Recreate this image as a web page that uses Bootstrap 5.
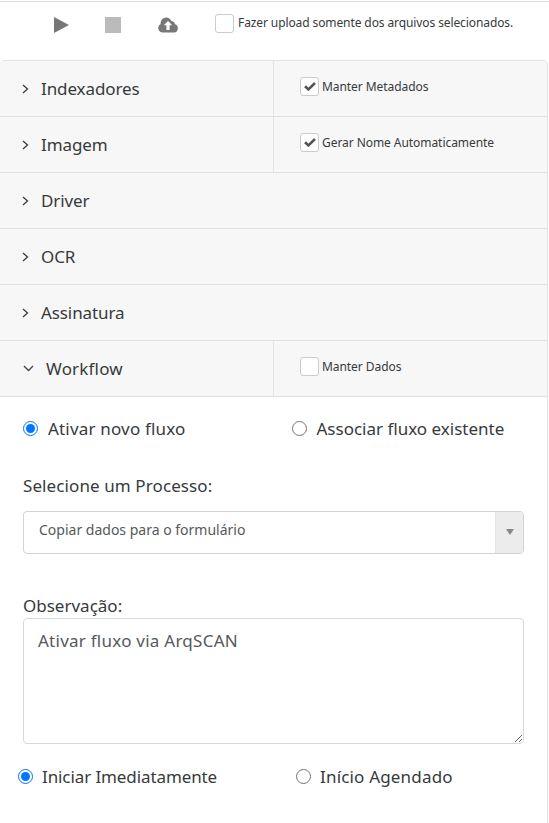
<!DOCTYPE html>
<html lang="pt-BR">
<head>
<meta charset="utf-8">
<meta name="viewport" content="width=device-width, initial-scale=1">
<title>ArqSCAN</title>
<link href="https://cdn.jsdelivr.net/npm/bootstrap@5.3.0/dist/css/bootstrap.min.css" rel="stylesheet">
<style>
body{font-family:"Noto Sans","Open Sans",sans-serif;font-size:17px;color:#373a3c;background:#fff;overflow:hidden}
.page{height:823px;padding-top:1px}
.toolbar{height:59px;border-top:1px solid #dcdcdc;padding:8px 0 0 54px}
.toolbar svg{display:block;flex:none}
.tool-play{margin:7px 36px 0 0}
.tool-stop{margin:7px 37px 0 0}
.tool-cloud{margin:7px 37px 0 0}
.panel{width:548px;height:763px;border:2px solid #e2e2e2;border-width:1px 1px 0 0;border-radius:5px 5px 0 0;overflow:hidden}
.panel-row{height:56px;background:#f7f7f7;border-bottom:1px solid #dfdfdf}
.row-title{width:274px;padding-left:22px;letter-spacing:-.1px}
.row-title.split{border-right:1px solid #e4e4e4}
.row-title svg{flex:none;margin-right:12px}
.opt{font-size:12px;line-height:19px;letter-spacing:-.06px}
.opt-top{letter-spacing:-.1px}
.opt-top .box{margin:4px 4px 0 0}
.opt-top .opt-text{margin-top:3px}
.opt-side{padding:16px 0 0 26px}
.box{width:19px;height:19px;border:1px solid #ccc;border-radius:3px;background:#fff;margin-right:3px;flex:none;display:flex;align-items:center;justify-content:center}
.choice{line-height:24px}
.choice input{width:15px;height:15px;margin:0 10px 2px 0;flex:none;accent-color:#0075ff}
.loose{letter-spacing:.18px}
.tight{letter-spacing:-.1px}
.choices-top{padding:20px 0 0 23px}
.choices-top .choice:first-child{width:268.5px}
.choices-end{padding:21px 0 0 18px}
.choices-end .choice:first-child{width:278px}
.choices-end input{margin-right:9px}
.fields{width:501px;margin-left:23px}
.lbl-a{margin-top:33px;line-height:24px;letter-spacing:.1px}
.picker{height:43px;margin-top:13px;border:1px solid #ced4da;border-radius:4px;font-size:14px;color:#55595c;overflow:hidden}
.picker-text{padding:7px 0 0 15px}
.picker-arrow{width:28px;background:#ececec;border-left:1px solid #e4e4e4;padding-bottom:2px}
.lbl-b{margin-top:40px;line-height:24px}
.note{height:126px;padding:10px 14px;font-size:17px;line-height:24px;letter-spacing:.25px;color:#55595c;border-color:#d5d9de;border-radius:4px}
</style>
<script src="https://cdn.jsdelivr.net/npm/bootstrap@5.3.0/dist/js/bootstrap.bundle.min.js"></script>
</head>
<body>
<main class="page">
  <div class="toolbar d-flex align-items-start">
    <svg class="tool-play" width="15" height="16" viewBox="0 0 15 16"><path d="M0 0L15 8L0 16Z" fill="#777"/></svg>
    <svg class="tool-stop" width="16" height="16"><rect width="16" height="16" fill="#bbb"/></svg>
    <svg class="tool-cloud" width="20" height="16" viewBox="0 0 20 16"><path fill="#777" fill-rule="evenodd" d="M4.7 15.5A4.5 4.5 0 0 1 2.7 7A5.6 5.6 0 0 1 13.5 4.2A3 3 0 0 1 16.9 7.3A4.2 4.2 0 0 1 16 15.5ZM10 4L5.8 8.3H8.4V13H11.6V8.3H14.2Z"/></svg>
    <label class="opt opt-top d-flex"><span class="box"></span><span class="opt-text">Fazer upload somente dos arquivos selecionados.</span></label>
  </div>
  <section class="panel">
    <div class="panel-row d-flex">
      <div class="row-title split d-flex align-items-center"><svg width="7" height="10" viewBox="0 0 7 10" fill="none" stroke="#444" stroke-width="1.4"><path d="M1 1L5.5 5L1 9"/></svg><span>Indexadores</span></div>
      <label class="opt opt-side d-flex"><span class="box"><svg width="12" height="9" viewBox="0 0 12 9"><path d="M1 4.2L4.4 7.4L11 1" fill="none" stroke="#555" stroke-width="2.6"/></svg></span><span>Manter Metadados</span></label>
    </div>
    <div class="panel-row d-flex">
      <div class="row-title split d-flex align-items-center"><svg width="7" height="10" viewBox="0 0 7 10" fill="none" stroke="#444" stroke-width="1.4"><path d="M1 1L5.5 5L1 9"/></svg><span>Imagem</span></div>
      <label class="opt opt-side d-flex"><span class="box"><svg width="12" height="9" viewBox="0 0 12 9"><path d="M1 4.2L4.4 7.4L11 1" fill="none" stroke="#555" stroke-width="2.6"/></svg></span><span>Gerar Nome Automaticamente</span></label>
    </div>
    <div class="panel-row d-flex">
      <div class="row-title d-flex align-items-center"><svg width="7" height="10" viewBox="0 0 7 10" fill="none" stroke="#444" stroke-width="1.4"><path d="M1 1L5.5 5L1 9"/></svg><span>Driver</span></div>
    </div>
    <div class="panel-row d-flex">
      <div class="row-title d-flex align-items-center"><svg width="7" height="10" viewBox="0 0 7 10" fill="none" stroke="#444" stroke-width="1.4"><path d="M1 1L5.5 5L1 9"/></svg><span>OCR</span></div>
    </div>
    <div class="panel-row d-flex">
      <div class="row-title d-flex align-items-center"><svg width="7" height="10" viewBox="0 0 7 10" fill="none" stroke="#444" stroke-width="1.4"><path d="M1 1L5.5 5L1 9"/></svg><span>Assinatura</span></div>
    </div>
    <div class="panel-row d-flex">
      <div class="row-title split d-flex align-items-center"><svg width="12" height="7" viewBox="0 0 12 7" fill="none" stroke="#444" stroke-width="1.4"><path d="M2 1L6.5 5.5L11 1"/></svg><span class="loose">Workflow</span></div>
      <label class="opt opt-side d-flex"><span class="box"></span><span>Manter Dados</span></label>
    </div>
    <div class="choices-top d-flex">
      <label class="choice d-flex align-items-center"><input type="radio" name="fluxo" checked><span class="loose">Ativar novo fluxo</span></label>
      <label class="choice d-flex align-items-center"><input type="radio" name="fluxo"><span>Associar fluxo existente</span></label>
    </div>
    <div class="fields">
      <div class="lbl-a">Selecione um Processo:</div>
      <div class="picker d-flex">
        <div class="picker-text flex-grow-1">Copiar dados para o formulário</div>
        <div class="picker-arrow d-flex align-items-center justify-content-center"><svg width="8" height="6" viewBox="0 0 8 6"><path d="M0 0H8L4 6Z" fill="#888"/></svg></div>
      </div>
      <label class="lbl-b d-block" for="obs">Observação:</label>
      <textarea class="form-control note d-block" id="obs">Ativar fluxo via ArqSCAN</textarea>
    </div>
    <div class="choices-end d-flex">
      <label class="choice d-flex align-items-center"><input type="radio" name="inicio" checked><span class="tight">Iniciar Imediatamente</span></label>
      <label class="choice d-flex align-items-center"><input type="radio" name="inicio"><span class="loose">Início Agendado</span></label>
    </div>
  </section>
</main>
</body>
</html>
